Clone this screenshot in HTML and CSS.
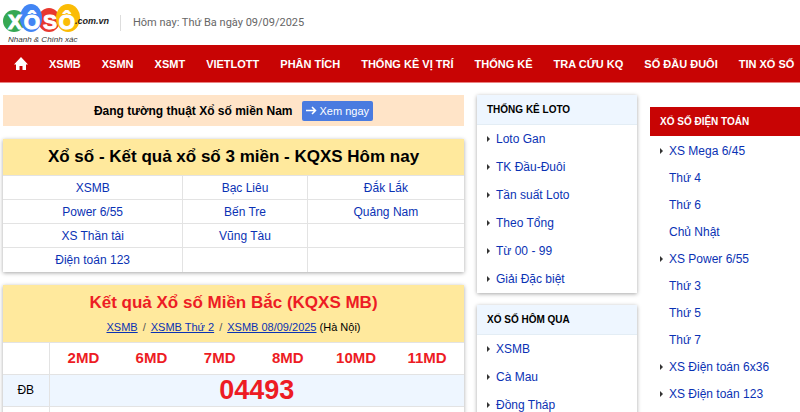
FILE: index.html
```html
<!DOCTYPE html>
<html lang="vi">
<head>
<meta charset="utf-8">
<meta name="viewport" content="width=device-width, initial-scale=1">
<title>Xổ số - Kết quả xổ số 3 miền</title>
<link rel="stylesheet" href="styles.css">
</head>
<body>
<header class="top">
  <a class="logo" href="#" aria-label="XOSO.com.vn">
    <svg width="112" height="44" viewBox="0 0 112 44">
      <ellipse cx="14" cy="20" rx="11" ry="11" fill="#35a853"/>
      <ellipse cx="49" cy="19" rx="11" ry="12" fill="#e8382f"/>
      <ellipse cx="31" cy="17" rx="11" ry="14" fill="#4285f4"/>
      <ellipse cx="68" cy="17" rx="12" ry="14" fill="#fbbc05"/>
      <g class="logo-letters" text-anchor="middle">
        <text x="15" y="28">X</text>
        <text x="32" y="28">Ô</text>
        <text x="50" y="28">S</text>
        <text x="67" y="28">Ô</text>
      </g>
      <text class="logo-domain" x="75" y="23">.com.vn</text>
      <text class="logo-tag" x="8" y="41">Nhanh &amp; Chính xác</text>
    </svg>
  </a>
  <p class="today">Hôm nay: Thứ Ba ngày 09/09/2025</p>
</header>

<nav class="nav">
  <a class="home" href="#" aria-label="Trang chủ">
    <svg width="14" height="14" viewBox="0 0 14 14"><path d="M7 0l7 7.500H12V13H8.500V9h-3v4H2V7.500H0z" fill="#fff"/></svg>
  </a>
  <a href="#">XSMB</a>
  <a href="#">XSMN</a>
  <a href="#">XSMT</a>
  <a href="#">VIETLOTT</a>
  <a href="#">PHÂN TÍCH</a>
  <a href="#">THỐNG KÊ VỊ TRÍ</a>
  <a href="#">THỐNG KÊ</a>
  <a href="#">TRA CỨU KQ</a>
  <a href="#">SỐ ĐẦU ĐUÔI</a>
  <a href="#">TIN XỔ SỐ</a>
</nav>

<div class="page">
  <main class="main">
    <div class="live">
      <strong>Đang tường thuật Xổ số miền Nam</strong>
      <a class="live-link" href="#">
        <svg width="11" height="9" viewBox="0 0 11 9"><path d="M0 4.500h9M6 1l3.500 3.500L6 8" fill="none" stroke="#fff" stroke-width="1.500"/></svg>
        Xem ngay
      </a>
    </div>

    <section class="card">
      <h1 class="card-title">Xổ số - Kết quả xổ số 3 miền - KQXS Hôm nay</h1>
      <table class="regions">
        <colgroup><col class="col-a"><col class="col-b"><col class="col-c"></colgroup>
        <tbody>
          <tr><td><a href="#">XSMB</a></td><td><a href="#">Bạc Liêu</a></td><td><a href="#">Đắk Lắk</a></td></tr>
          <tr><td><a href="#">Power 6/55</a></td><td><a href="#">Bến Tre</a></td><td><a href="#">Quảng Nam</a></td></tr>
          <tr><td><a href="#">XS Thần tài</a></td><td><a href="#">Vũng Tàu</a></td><td></td></tr>
          <tr><td><a href="#">Điện toán 123</a></td><td></td><td></td></tr>
        </tbody>
      </table>
    </section>

    <section class="card">
      <div class="result-head">
        <h2>Kết quả Xổ số Miền Bắc (KQXS MB)</h2>
        <p><a href="#">XSMB</a><span class="slash">/</span><a href="#">XSMB Thứ 2</a><span class="slash">/</span><a href="#">XSMB 08/09/2025</a> (Hà Nội)</p>
      </div>
      <table class="result">
        <colgroup><col class="col-name"><col class="col-code" span="5"><col class="col-last"></colgroup>
        <tbody>
          <tr class="codes"><th></th><td>2MD</td><td>6MD</td><td>7MD</td><td>8MD</td><td>10MD</td><td>11MD</td></tr>
          <tr class="special"><th scope="row">ĐB</th><td colspan="6">04493</td></tr>
          <tr><th></th><td colspan="6"></td></tr>
        </tbody>
      </table>
    </section>
  </main>

  <aside class="side">
    <section class="card">
      <h3 class="side-title">THỐNG KÊ LOTO</h3>
      <ul class="links">
        <li><a href="#">Loto Gan</a></li>
        <li><a href="#">TK Đầu-Đuôi</a></li>
        <li><a href="#">Tần suất Loto</a></li>
        <li><a href="#">Theo Tổng</a></li>
        <li><a href="#">Từ 00 - 99</a></li>
        <li><a href="#">Giải Đặc biệt</a></li>
      </ul>
    </section>
    <section class="card">
      <h3 class="side-title">XỔ SỐ HÔM QUA</h3>
      <ul class="links">
        <li><a href="#">XSMB</a></li>
        <li><a href="#">Cà Mau</a></li>
        <li><a href="#">Đồng Tháp</a></li>
      </ul>
    </section>
  </aside>

  <aside class="computed">
    <h3 class="side-title red">XỔ SỐ ĐIỆN TOÁN</h3>
    <ul class="links compact">
      <li><a href="#">XS Mega 6/45</a></li>
      <li class="sub"><a href="#">Thứ 4</a></li>
      <li class="sub"><a href="#">Thứ 6</a></li>
      <li class="sub"><a href="#">Chủ Nhật</a></li>
      <li><a href="#">XS Power 6/55</a></li>
      <li class="sub"><a href="#">Thứ 3</a></li>
      <li class="sub"><a href="#">Thứ 5</a></li>
      <li class="sub"><a href="#">Thứ 7</a></li>
      <li><a href="#">XS Điện toán 6x36</a></li>
      <li><a href="#">XS Điện toán 123</a></li>
    </ul>
  </aside>
</div>
</body>
</html>
```

FILE: styles.css
```css
* { box-sizing: border-box; }

body {
  margin: 0;
  height: 100vh;
  overflow: hidden;
  background: #fff;
  color: #000;
  font: 12px/16px "Liberation Sans", Arial, sans-serif;
}

h1, h2, h3, p, ul { margin: 0; padding: 0; }
a { color: #0a32b4; text-decoration: none; }
table { width: 100%; border-collapse: collapse; table-layout: fixed; }

.top { display: flex; align-items: center; height: 45px; }
.logo { display: block; height: 44px; width: 120px; }
.logo-letters {
  font: bold 21px "Liberation Sans", Arial, sans-serif;
  fill: #fff;
  stroke: #fff;
  stroke-width: 1px;
}
.logo-domain { font: italic bold 9px "Liberation Sans", Arial, sans-serif; fill: #222; }
.logo-tag { font: italic 8px "Liberation Sans", Arial, sans-serif; fill: #333; }
.today {
  border-left: 1px solid #ddd;
  padding-left: 12px;
  color: #666;
  font-family: Roboto, sans-serif;
  font-size: 11px;
}

.nav {
  display: flex;
  align-items: center;
  height: 38px;
  padding-left: 3px;
  overflow: hidden;
  background: #c80404;
  border-bottom: 1px solid #ea8282;
  font-size: 11px;
  font-weight: bold;
  white-space: nowrap;
}
.nav a { padding: 0 10px 0 11px; color: #fff; }
.nav .home { display: flex; }

.page {
  display: grid;
  grid-template-columns: minmax(0, 1fr) 160px 150px;
  gap: 13px;
  align-items: start;
  padding: 12px 0 0 3px;
}
.main { display: grid; gap: 13px; }
.side { display: grid; gap: 12px; }
.card { background: #fff; box-shadow: 0 1px 4px rgba(0, 0, 0, .35); }

.live {
  display: flex;
  align-items: center;
  justify-content: center;
  gap: 9px;
  height: 31px;
  background: #ffe4c8;
}
.live-link {
  display: flex;
  align-items: center;
  gap: 3px;
  padding: 2px 4px;
  border-radius: 2px;
  background: #4a7be0;
  color: #fff;
  font-size: 11px;
}

.card-title {
  background: #ffe99d;
  font-size: 17px;
  line-height: 36px;
  text-align: center;
}
.regions td {
  height: 24px;
  padding: 0;
  border-top: 1px solid #e3e3e3;
  text-align: center;
}
.regions td + td { border-left: 1px solid #e3e3e3; }
.col-a { width: 39%; }
.col-b { width: 27%; }
.col-c { width: 34%; }

.result-head { padding: 8px 0 7px; background: #ffe99d; text-align: center; }
.result-head h2 { color: #ed1c24; font-size: 17px; line-height: 20px; }
.result-head p { padding-top: 6px; font-size: 11px; }
.result-head a { text-decoration: underline; }
.slash { padding: 0 5px; color: #555; }

.col-name { width: 10%; }
.col-code { width: 14.8%; }
.col-last { width: 16%; }
.result th, .result td { height: 32px; padding: 0; border-top: 1px solid #e3e3e3; text-align: center; }
.result th { border-right: 1px solid #e3e3e3; font-weight: normal; }
.result .codes td { color: #ed1c24; font-size: 15px; font-weight: bold; }
.special { background: #eef6ff; }
.result .special td { color: #ed1c24; font-size: 27px; line-height: 28px; font-weight: bold; }

.side-title {
  padding: 0 10px;
  border-bottom: 1px solid #e3edf5;
  background: #eef6ff;
  font-size: 10px;
  line-height: 29px;
}
.side-title.red { border: 0; background: #c80404; color: #fff; }
.links { list-style: none; }
.links li { display: flex; align-items: center; gap: 6px; height: 28px; padding-left: 10px; }
.links li::before {
  content: "";
  border: 3px solid transparent;
  border-left-color: #333;
  border-right-width: 0;
}
.links .sub::before { border-left-color: transparent; }
.computed { padding-top: 12px; }
.links.compact { padding-top: 1px; }
.links.compact li { height: 27px; }
```
